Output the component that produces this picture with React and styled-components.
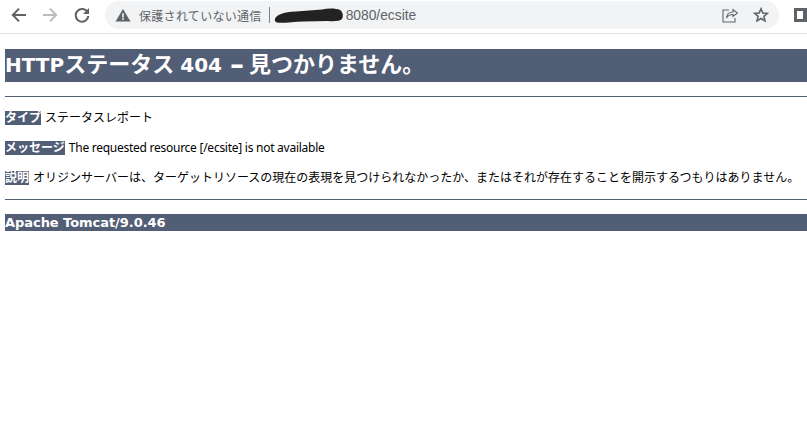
import React from 'react'
import styled, { createGlobalStyle } from 'styled-components'

const Global = createGlobalStyle`
  html, body { margin: 0; padding: 0; background: #fff; overflow: hidden; }
  body { font-family: "Liberation Sans", "Noto Sans CJK JP", sans-serif; }
`

const Toolbar = styled.div`
  height: 34px;
  box-sizing: border-box;
  border-bottom: 1px solid #dfe1e4;
  display: flex;
  align-items: flex-start;
  padding-top: 1px;
  background: #fff;
`
const NavButton = styled.div`
  width: ${p => p.$w}px;
  height: 28px;
  display: flex;
  align-items: center;
  justify-content: center;
  flex: none;
`
const Omnibox = styled.div`
  width: 674px;
  height: 28px;
  margin-left: 4px;
  flex: none;
  border-radius: 14px;
  background: #f1f3f4;
  display: flex;
  align-items: center;
  padding: 0 10px 0 10px;
  box-sizing: border-box;
`
const Security = styled.span`
  font-size: 12px;
  color: #5f6368;
  margin-left: 8px;
  white-space: nowrap;
  letter-spacing: 0.3px;
`
const Divider = styled.span`
  width: 1px;
  height: 16px;
  background: #7d8185;
  margin: 0 4px 0 7px;
  flex: none;
`
const Url = styled.span`
  font-size: 13.8px;
  color: #5f6368;
  white-space: nowrap;
  margin-left: 3px;
`
const Actions = styled.div`
  margin-left: auto;
  display: flex;
  gap: 15px;
  align-items: center;
`
const WindowIcon = styled.div`
  width: 13px;
  height: 14px;
  box-sizing: border-box;
  border: 3px solid #5f6368;
  border-right-width: 4px;
  margin: 7px 0 0 15px;
  flex: none;
`
const Content = styled.div`
  padding: 15px 0 0 5px;
`
const Heading = styled.h1`
  margin: 0;
  height: 33px;
  line-height: 31px;
  box-sizing: border-box;
  background: #525d76;
  color: #fff;
  font-size: 22px;
  font-weight: bold;
  white-space: nowrap;
`
const HeadingLatin = styled.span`
  font-family: "DejaVu Sans", sans-serif;
  font-size: 20px;
`
const HeadingDash = styled.span`
  font-family: "DejaVu Sans", sans-serif;
  font-size: 28px;
  line-height: 0;
  vertical-align: -2px;
  margin: 0 5px 0 1px;
`
const Rule = styled.hr`
  height: 1px;
  border: 0;
  margin: ${p => p.$top}px 0 0;
  background: #525d76;
`
const Paragraph = styled.p`
  margin: ${p => p.$top}px 0 0;
  height: 16px;
  line-height: 18px;
  font-size: 12px;
  color: #000;
  white-space: nowrap;
  word-spacing: 0.7px;
`
const Label = styled.b`
  background: #525d76;
  color: #fff;
  font-weight: bold;
`
const Message = styled.span`
  font-family: "Noto Sans", sans-serif;
  letter-spacing: -0.26px;
  word-spacing: 0;
`
const Footer = styled.h3`
  margin: 14px 0 0;
  height: 17px;
  line-height: 18px;
  background: #525d76;
  color: #fff;
  font-family: "DejaVu Sans", sans-serif;
  font-size: 13px;
  font-weight: bold;
  letter-spacing: -0.05px;
`

export default function App() {
  return (
    <>
      <Global />
      <Toolbar>
        <NavButton $w={37}>
          <svg width="16" height="16" viewBox="0 0 16 16" fill="none" stroke="#5f6368" strokeWidth="2">
            <path d="M15 8H2M8 1.600 1.800 8 8 14.400" />
          </svg>
        </NavButton>
        <NavButton $w={26}>
          <svg width="16" height="16" viewBox="0 0 16 16" fill="none" stroke="#b9bcc0" strokeWidth="2">
            <path d="M1 8h13M8 1.600 14.200 8 8 14.400" />
          </svg>
        </NavButton>
        <NavButton $w={38}>
          <svg width="16" height="16" viewBox="0 0 16 16" fill="none">
            <path d="M13.600 5.400A6.300 6.300 0 1 0 14.300 9" stroke="#5f6368" strokeWidth="2" />
            <path d="M15 1v6H9z" fill="#5f6368" />
          </svg>
        </NavButton>
        <Omnibox>
          <svg width="16" height="14" viewBox="0 0 16 14">
            <path d="M8 1 15.500 13.500H.5z" fill="#5f6368" />
            <path d="M7.200 5.200h1.600v4.200H7.200zM7.200 10.300h1.600v1.600H7.200z" fill="#f1f3f4" />
          </svg>
          <Security>保護されていない通信</Security>
          <Divider />
          <svg width="69" height="15" viewBox="0 0 69 15">
            <path d="M1 11C2 7 9 4 22 3.500L48 1.500C54 0 62 0 66 2c3 2 3.500 6 2 9-2 2-7 2.500-14 2L30 13.500C18 14 8 15.500 3 14.500 1 14 .5 12.500 1 11z" fill="#222" />
          </svg>
          <Url>8080/ecsite</Url>
          <Actions>
            <svg width="16" height="16" viewBox="0 0 16 16" fill="none" stroke="#5f6368" strokeWidth="1.1">
              <path d="M7 3H1v12h12v-4" />
              <path d="M4.500 11c.3-4 3-6 6.500-6V2.500L15.500 6 11 9.500V7.500c-3 0-5 1-6.500 3.500z" />
            </svg>
            <svg width="16" height="16" viewBox="0 0 16 16" fill="none" stroke="#5f6368" strokeWidth="1.6">
              <path d="M8 1.800 9.800 6l4.600.4-3.500 3 1.100 4.500L8 11.500l-4 2.400 1.100-4.500-3.500-3L6.200 6z" />
            </svg>
          </Actions>
        </Omnibox>
        <WindowIcon />
      </Toolbar>
      <Content>
        <Heading><HeadingLatin>HTTP</HeadingLatin>ステータス <HeadingLatin>404 </HeadingLatin><HeadingDash>–</HeadingDash>見つかりません。</Heading>
        <Rule $top={14} />
        <Paragraph $top={12}><Label>タイプ</Label> ステータスレポート</Paragraph>
        <Paragraph $top={14}><Label>メッセージ</Label> <Message>The requested resource [/ecsite] is not available</Message></Paragraph>
        <Paragraph $top={14}><Label>説明</Label> オリジンサーバーは、ターゲットリソースの現在の表現を見つけられなかったか、またはそれが存在することを開示するつもりはありません。</Paragraph>
        <Rule $top={14} />
        <Footer>Apache Tomcat/9.0.46</Footer>
      </Content>
    </>
  )
}
